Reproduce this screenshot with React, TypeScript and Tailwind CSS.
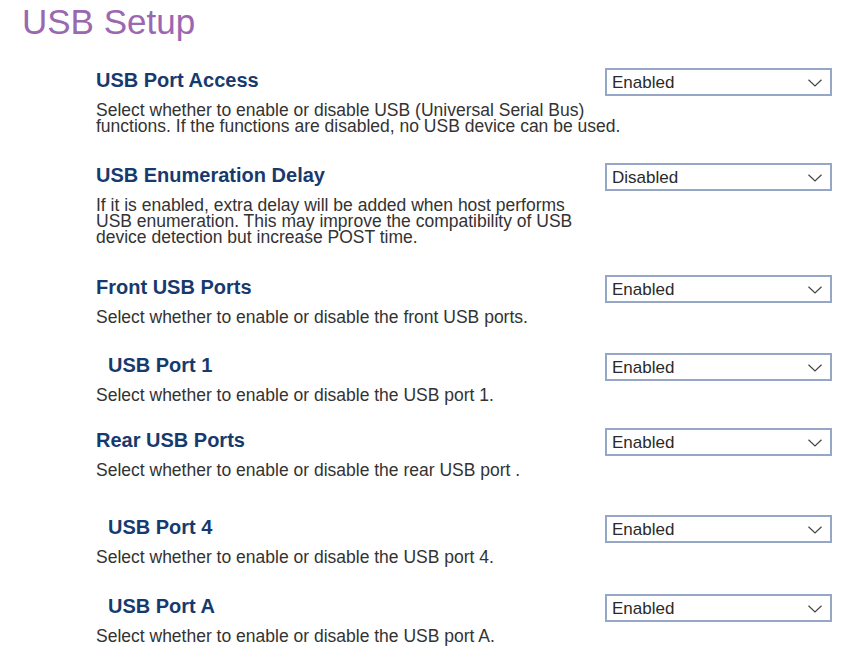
interface Setting {
  title: string;
  value: string;
  desc: string[];
  indent?: boolean;
  top: string;
}

// spacing above each block is taken from the screenshot, it is not even
const settings: Setting[] = [
  {
    title: "USB Port Access",
    value: "Enabled",
    desc: [
      "Select whether to enable or disable USB (Universal Serial Bus)",
      "functions. If the functions are disabled, no USB device can be used.",
    ],
    top: "mt-[26px]",
  },
  {
    title: "USB Enumeration Delay",
    value: "Disabled",
    desc: [
      "If it is enabled, extra delay will be added when host performs",
      "USB enumeration. This may improve the compatibility of USB",
      "device detection but increase POST time.",
    ],
    top: "mt-[29px]",
  },
  {
    title: "Front USB Ports",
    value: "Enabled",
    desc: ["Select whether to enable or disable the front USB ports."],
    top: "mt-[30px]",
  },
  {
    title: "USB Port 1",
    value: "Enabled",
    desc: ["Select whether to enable or disable the USB port 1."],
    indent: true,
    top: "mt-[28px]",
  },
  {
    title: "Rear USB Ports",
    value: "Enabled",
    desc: ["Select whether to enable or disable the rear USB port ."],
    top: "mt-[25px]",
  },
  {
    title: "USB Port 4",
    value: "Enabled",
    desc: ["Select whether to enable or disable the USB port 4."],
    indent: true,
    top: "mt-[37px]",
  },
  {
    title: "USB Port A",
    value: "Enabled",
    desc: ["Select whether to enable or disable the USB port A."],
    indent: true,
    top: "mt-[29px]",
  },
];

function Select({ value }: { value: string }) {
  return (
    <div className="w-[227px] h-[28px] border-2 border-[#96a6c5] bg-white flex items-center justify-between pl-[5px] pr-[8px]">
      <span className="text-[17px] leading-none text-[#2a2a2a]">{value}</span>
      <svg width="14" height="8" viewBox="0 0 14 8" fill="none" className="mt-[2px]">
        <polyline points="0.5,0.8 7,7 13.5,0.8" stroke="#444" strokeWidth="1.2" />
      </svg>
    </div>
  );
}

export default function App() {
  return (
    <div
      className="w-[858px] h-[665px] bg-white overflow-hidden pt-[2px]"
      style={{ fontFamily: '"Liberation Sans", Arial, sans-serif' }}
    >
      <h1 className="ml-[22px] text-[35px] leading-[40px] text-[#9a68b0]">USB Setup</h1>
      <div className="ml-[96px] w-[736px]">
        {settings.map((s) => (
          <div key={s.title} className={s.top}>
            <div className="flex items-center justify-between h-[28px]">
              <span
                className={`mb-[4px] text-[20px] leading-[24px] font-bold text-[#173a6e] ${
                  s.indent ? "pl-[12px]" : ""
                }`}
              >
                {s.title}
              </span>
              <Select value={s.value} />
            </div>
            <p className="mt-[6px] text-[17.5px] leading-[16px] text-[#333]">
              {s.desc.map((l) => (
                <span key={l} className="block">
                  {l}
                </span>
              ))}
            </p>
          </div>
        ))}
      </div>
    </div>
  );
}
